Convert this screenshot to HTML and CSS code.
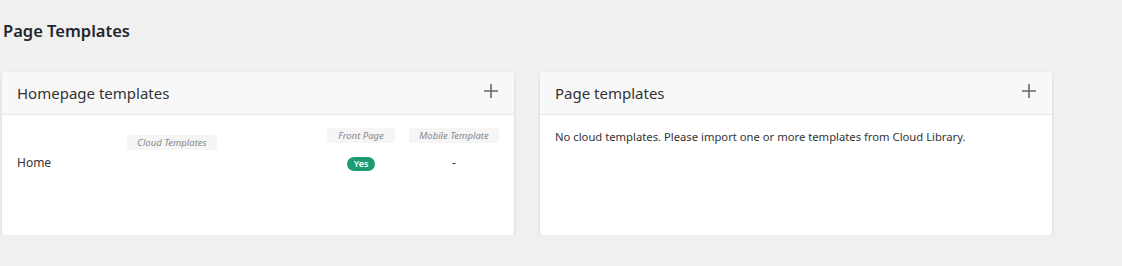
FILE: index.html
```html
<!DOCTYPE html>
<html lang="en">
<head>
    <meta charset="UTF-8">
    <meta name="viewport" content="width=device-width, initial-scale=1.0">
    <title>Page Templates</title>
    <link rel="stylesheet" href="styles.css">
</head>
<body>
    <h1 class="page-title">Page Templates</h1>

    <div class="cards">
        <div class="card">
            <div class="card-header">
                <h2>Homepage templates</h2>
                <button class="add-btn" title="Add">
                    <svg width="14" height="14" viewBox="0 0 14 14"><path d="M7 0v14M0 7h14" stroke="#666" stroke-width="1.6"/></svg>
                </button>
            </div>
            <div class="card-body">
                <div class="tpl-grid">
                    <div class="col-head col-name"><span class="pill">Cloud Templates</span></div>
                    <div class="col-head col-up"><span class="pill pill-full">Front Page</span></div>
                    <div class="col-head col-up col-last"><span class="pill pill-full">Mobile Template</span></div>

                    <div class="cell-name">Home</div>
                    <div class="cell-center"><span class="badge">Yes</span></div>
                    <div class="cell-center col-last">-</div>
                </div>
            </div>
        </div>

        <div class="card">
            <div class="card-header">
                <h2>Page templates</h2>
                <button class="add-btn" title="Add">
                    <svg width="14" height="14" viewBox="0 0 14 14"><path d="M7 0v14M0 7h14" stroke="#666" stroke-width="1.6"/></svg>
                </button>
            </div>
            <div class="card-body">
                <p class="empty">No cloud templates. Please import one or more templates from <a href="#">Cloud Library</a>.</p>
            </div>
        </div>
    </div>
</body>
</html>
```

FILE: styles.css
```css
body {
    margin: 0;
    padding: 0 2px;
    font-family: "Noto Sans", "Open Sans", sans-serif;
    background-color: #f0f0f0;
    color: #333;
}
.page-title {
    margin: 0;
    padding: 19px 0 0 1px;
    height: 72px;
    box-sizing: border-box;
    font-size: 16.5px;
    font-weight: 600;
    color: #23282d;
    line-height: 24px;
}
.cards {
    display: flex;
    gap: 26px;
}
.card {
    width: 512px;
    height: 163px;
    background-color: #fff;
    border-radius: 3px;
    box-shadow: 0 1px 3px rgba(0, 0, 0, 0.15);
    overflow: hidden;
}
.card-header {
    display: flex;
    align-items: center;
    justify-content: space-between;
    height: 42px;
    padding: 0 15px;
    background-color: #f8f8f8;
    border-bottom: 1px solid #e8e8e8;
}
.card-header h2 {
    margin: 0;
    font-size: 15px;
    font-weight: 400;
    color: #333;
}
.add-btn {
    background: none;
    border: none;
    padding: 0;
    margin: -4px 1px 0 0;
    cursor: pointer;
    line-height: 0;
}
.card-body {
    padding: 12px 15px;
}
.tpl-grid {
    display: grid;
    grid-template-columns: 1fr 68px 104px;
    align-items: center;
}
.col-last {
    padding-left: 14px;
}
.col-head {
    text-align: center;
    height: 24px;
}
.col-name {
    padding-top: 2px;
}
.pill {
    display: inline-block;
    padding: 0 10px;
    height: 15px;
    line-height: 15px;
    font-size: 9.5px;
    font-style: italic;
    color: #888;
    background-color: #f5f5f5;
    border-radius: 3px;
}
.pill-full {
    display: block;
    padding: 0;
}
.cell-name {
    font-size: 12px;
    line-height: 20px;
}
.cell-center {
    text-align: center;
    font-size: 12px;
    line-height: 20px;
}
.badge {
    display: inline-block;
    padding: 0 7px;
    height: 14px;
    line-height: 14px;
    font-size: 9px;
    font-weight: 600;
    color: #fff;
    background-color: #1b9a73;
    border-radius: 7px;
}
.empty {
    margin: 2px 0 0;
    font-size: 11.25px;
}
.empty a {
    color: #333;
    text-decoration: none;
}
```
